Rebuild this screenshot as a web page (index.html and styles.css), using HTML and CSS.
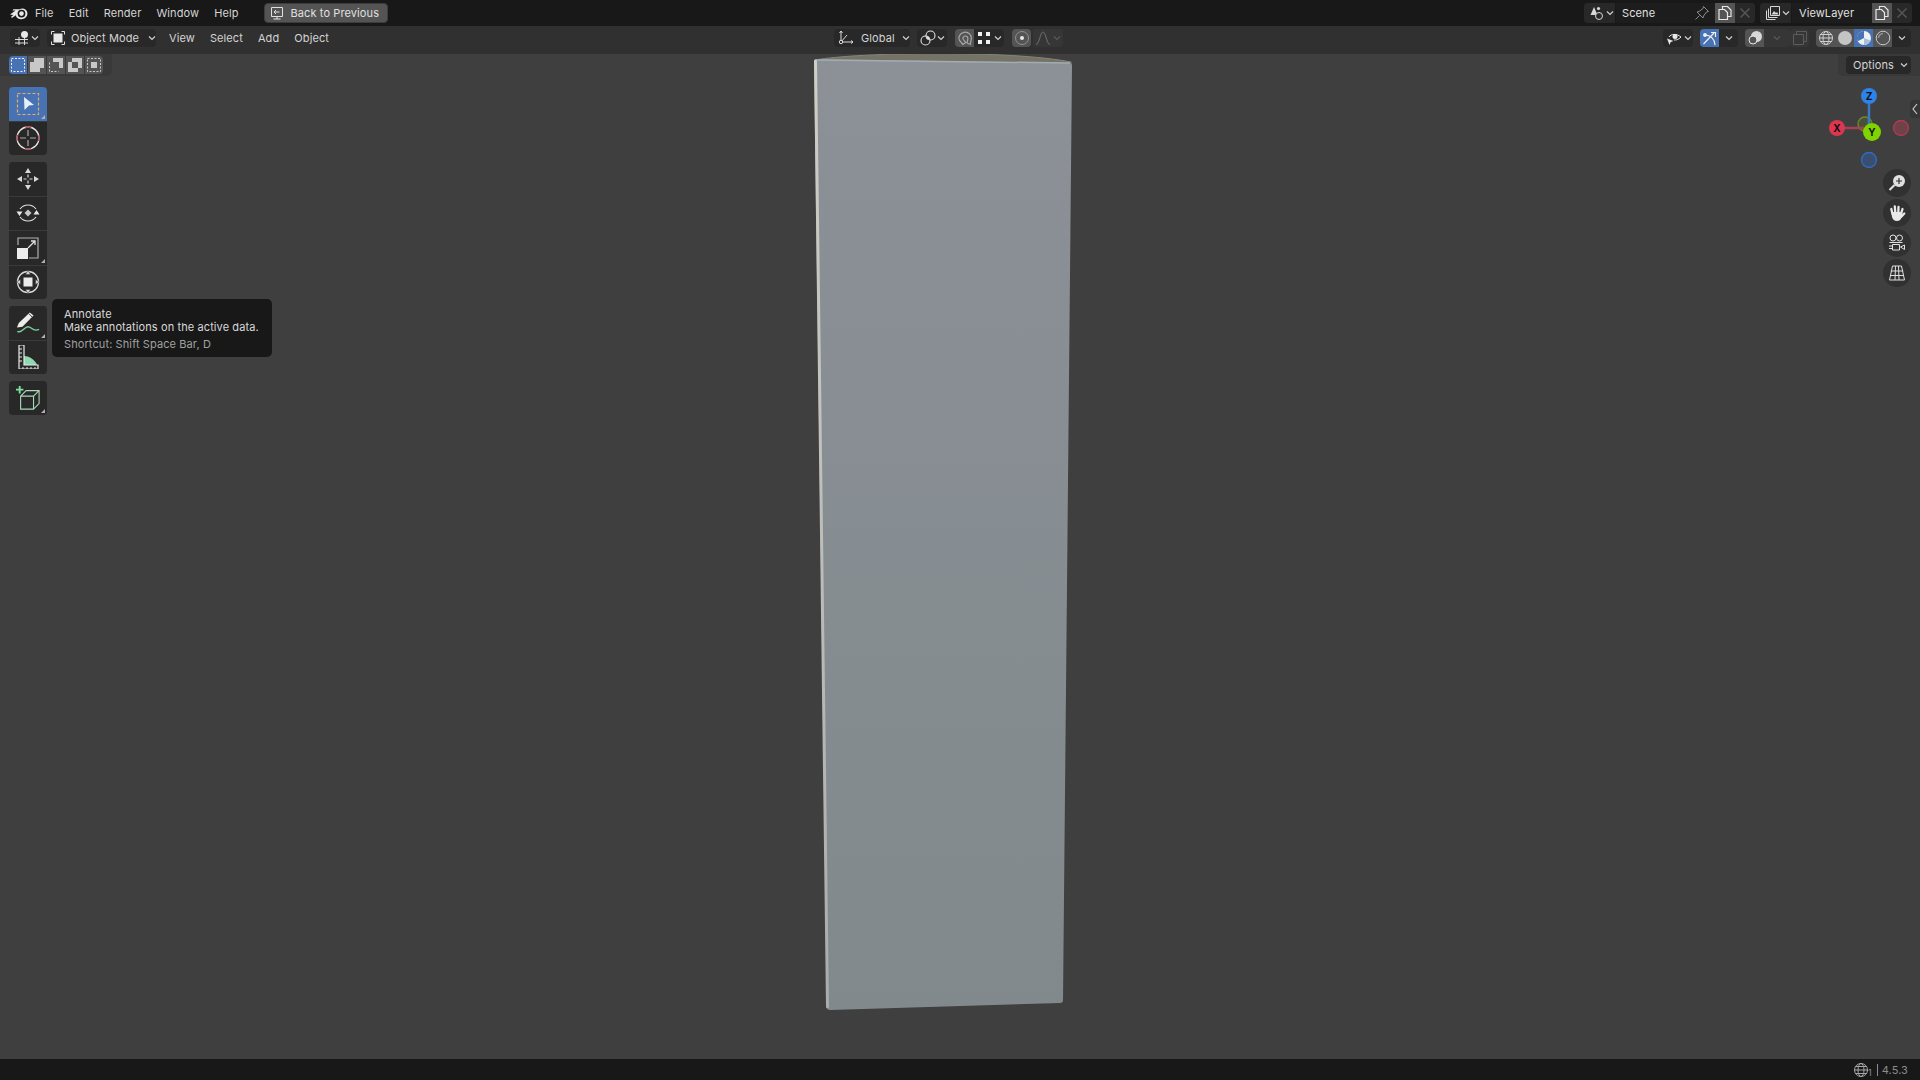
FILE: index.html
```html
<!DOCTYPE html>
<html>
<head>
  <link rel="stylesheet" href="styles.css">
</head>
<body>
  <div class="topbar">
    <svg class="logo" viewBox="0 0 18 14"><path d="M0 8.6 5.6 4.4H2.4L3.4 3.2H9.6C12.8 1.4 17 3.2 17.4 7 17.8 11 13.6 14 9.8 13 7.2 12.4 5.8 10.6 5.8 9.2L2.6 11.6C1.6 12.2.8 11.4 1.4 10.6L3.4 8.9Z" fill="#e8e8e8"/><circle cx="11.5" cy="7.6" r="3.9" fill="#181818"/><circle cx="11.5" cy="7.6" r="2.3" fill="#e8e8e8"/></svg>
    <nav class="menu">
      <span>File</span><span>Edit</span><span>Render</span><span>Window</span><span>Help</span>
    </nav>
    <div class="back-btn">
      <svg class="ico" viewBox="0 0 16 16" fill="none" stroke="#e0e0e0"><path d="M2.5 2.5H13.5V11.5H2.5ZM8 11.5V14M4.5 14H11.5M10.5 7H5M7 5 5 7 7 9"/></svg>
      <span>Back to Previous</span>
    </div>
    <div class="top-right">
      <div class="field scene">
        <div class="field-icon">
          <svg class="ico" viewBox="0 0 16 16"><path d="M5 2 8.5 10H1.5Z" fill="#d8d8d8"/><circle cx="9.5" cy="3.5" r="1.6" fill="#d8d8d8"/><circle cx="10" cy="11" r="3.5" fill="#282828" stroke="#d8d8d8"/></svg>
          <svg class="caret" viewBox="0 0 8 8"><path d="M1 2.5 4 5.5 7 2.5"/></svg>
        </div>
        <div class="field-name"><span>Scene</span>
          <svg class="ico pin" viewBox="0 0 16 16" fill="none" stroke="#8c8c8c"><path d="M9.5 1.5 14.5 6.5 12.5 7 9.5 11 9 13 3 7 5 6.5 9 3.5ZM5.5 10.5 1.5 14.5"/></svg>
        </div>
        <div class="field-btn on"><svg class="ico" viewBox="0 0 16 16" fill="none" stroke="#e8e8e8" stroke-width="1.2"><path d="M5.5 4.5V1.5H10.5L14 5V11.5H10.5M2 4.5H7.5L10.5 7.5V14.5H2Z"/></svg></div>
        <div class="field-btn"><svg class="ico" viewBox="0 0 16 16" stroke="#555" stroke-width="1.5"><path d="M3.5 3.5 12.5 12.5M12.5 3.5 3.5 12.5"/></svg></div>
      </div>
      <div class="field layer">
        <div class="field-icon">
          <svg class="ico" viewBox="0 0 16 16" fill="none" stroke="#d8d8d8"><path d="M5.5 1.5H14.5V10.5H5.5ZM3.5 3.5V12.5H12.5M1.5 5.5V14.5H10.5"/><path d="M6.5 9.5 9 6 11 8 12 7 13.5 9.5Z" fill="#d8d8d8" stroke="none"/></svg>
          <svg class="caret" viewBox="0 0 8 8"><path d="M1 2.5 4 5.5 7 2.5"/></svg>
        </div>
        <div class="field-name"><span>ViewLayer</span></div>
        <div class="field-btn on"><svg class="ico" viewBox="0 0 16 16" fill="none" stroke="#e8e8e8" stroke-width="1.2"><path d="M5.5 4.5V1.5H10.5L14 5V11.5H10.5M2 4.5H7.5L10.5 7.5V14.5H2Z"/></svg></div>
        <div class="field-btn"><svg class="ico" viewBox="0 0 16 16" stroke="#555" stroke-width="1.5"><path d="M3.5 3.5 12.5 12.5M12.5 3.5 3.5 12.5"/></svg></div>
      </div>
    </div>
  </div>

  <div class="header">
    <div class="hdr-left">
      <div class="btn editor-btn">
        <svg class="ico" viewBox="0 0 16 16" fill="none" stroke="#d8d8d8"><path d="M1 9.5H14M1 13H14M5 7V15M10.5 7.5V15"/><circle cx="10.5" cy="4.5" r="3.5" fill="#e8e8e8" stroke="none"/></svg>
        <svg class="caret" viewBox="0 0 8 8"><path d="M1 2.5 4 5.5 7 2.5"/></svg>
      </div>
      <div class="btn mode-btn">
        <svg class="ico" viewBox="0 0 16 16" fill="none" stroke="#e0e0e0"><path d="M1.5 4.5V1.5H4.5M11.5 1.5H14.5V4.5M14.5 11.5V14.5H11.5M4.5 14.5H1.5V11.5"/><rect x="3.5" y="3.5" width="9" height="9" fill="#e8e8e8" stroke="none"/></svg>
        <span class="mode-label">Object Mode</span>
        <svg class="caret" viewBox="0 0 8 8"><path d="M1 2.5 4 5.5 7 2.5"/></svg>
      </div>
      <nav class="menu hdr-menu"><span>View</span><span>Select</span><span>Add</span><span>Object</span></nav>
    </div>
    <div class="hdr-center">
      <div class="btn global-btn">
        <svg class="ico" viewBox="0 0 16 16" fill="none" stroke="#d8d8d8"><path d="M3 12V1M1.5 3 3 1 4.5 3M3 12H15M13 10.5 15 12 13 13.5M3 12 9 5"/><circle cx="3" cy="12" r="1.7" fill="#303030"/></svg>
        <span class="global-label">Global</span>
        <svg class="caret" viewBox="0 0 8 8"><path d="M1 2.5 4 5.5 7 2.5"/></svg>
      </div>
      <div class="btn pivot-btn">
        <svg class="ico" viewBox="0 0 16 16" fill="none" stroke="#e0e0e0" stroke-width="1.1"><circle cx="5.5" cy="10.5" r="4.5"/><circle cx="10.5" cy="5.5" r="4.5"/><circle cx="8" cy="8" r="1.6" fill="#e0e0e0" stroke="none"/></svg>
        <svg class="caret" viewBox="0 0 8 8"><path d="M1 2.5 4 5.5 7 2.5"/></svg>
      </div>
      <div class="joined snap">
        <div class="btn square on"><svg class="ico" viewBox="0 0 16 16" fill="none" stroke="#a8a8a8" stroke-width="1.2"><path d="M6 14.5 2.5 10.5C.8 8 2.5 3 7 2.3 11.5 1.7 15 5 14.3 9L13.2 14.5 10 13 10.8 9.5C11.2 7.5 10 5.8 8.3 6 6.3 6.2 5.3 8 6.3 9.500L8.700 12.500Z"/></svg></div>
        <div class="btn grid-btn">
          <svg class="ico" viewBox="0 0 16 16" fill="#f0f0f0"><rect x="2" y="2" width="4" height="4"/><rect x="10" y="2" width="4" height="4"/><rect x="2" y="10" width="4" height="4"/><rect x="10" y="10" width="4" height="4"/></svg>
          <svg class="caret" viewBox="0 0 8 8"><path d="M1 2.5 4 5.5 7 2.5"/></svg>
        </div>
      </div>
      <div class="btn square on prop-btn"><svg class="ico" viewBox="0 0 16 16" fill="none" stroke="#909090"><circle cx="8" cy="8" r="6.5"/><circle cx="8" cy="8" r="2" fill="#e8e8e8" stroke="none"/></svg></div>
      <div class="btn falloff-btn">
        <svg class="ico" viewBox="0 0 16 16" fill="none" stroke="#666" stroke-width="1.2"><path d="M1 14.5C4.5 14.5 5 2 8 2S11.5 14.5 15 14.5"/></svg>
        <svg class="caret dim" viewBox="0 0 8 8"><path d="M1 2.5 4 5.5 7 2.5"/></svg>
      </div>
    </div>
    <div class="hdr-right">
      <div class="btn vis-btn">
        <svg class="ico" viewBox="0 0 16 16"><path d="M3 7C5 3.5 11 3.5 15 7 12 10 10 10 8 10" fill="none" stroke="#e8e8e8"/><circle cx="9" cy="6.5" r="2.5" fill="#e8e8e8"/><path d="M1 8.5 7.5 11 4.7 12 3.5 15Z" fill="#e8e8e8"/></svg>
        <svg class="caret" viewBox="0 0 8 8"><path d="M1 2.5 4 5.5 7 2.5"/></svg>
      </div>
      <div class="joined">
        <div class="btn square blue"><svg class="ico" viewBox="0 0 16 16" fill="none" stroke="#f0f0f0" stroke-width="1.2"><path d="M1.5 14 12 3M3 5C8.5 5 13 9.5 13 15M9 2.5H13.5V7"/><circle cx="3" cy="5" r="1.3" fill="#f0f0f0"/></svg></div>
        <div class="btn small-drop"><svg class="caret" viewBox="0 0 8 8"><path d="M1 2.5 4 5.5 7 2.5"/></svg></div>
      </div>
      <div class="joined">
        <div class="btn square on"><svg class="ico" viewBox="0 0 16 16"><circle cx="9.5" cy="6.5" r="5.5" fill="#d8d8d8"/><circle cx="6" cy="10" r="4" fill="#545454" stroke="#e8e8e8"/></svg></div>
        <div class="btn small-drop dim-bg"><svg class="caret dim" viewBox="0 0 8 8"><path d="M1 2.5 4 5.5 7 2.5"/></svg></div>
      </div>
      <div class="btn square xray"><svg class="ico" viewBox="0 0 16 16" fill="none" stroke="#5c5c5c"><path d="M4.5 4.5V1.5H14.5V11.5H11.5M1.5 4.5H11.5V14.5H1.5Z"/></svg></div>
      <div class="joined shading">
        <div class="btn square on"><svg class="ico" viewBox="0 0 16 16" fill="none" stroke="#d0d0d0"><circle cx="8" cy="8" r="6.5"/><ellipse cx="8" cy="8" rx="3" ry="6.5"/><path d="M1.5 8H14.5M2.5 4.5H13.5M2.5 11.5H13.5"/></svg></div>
        <div class="btn square on"><svg class="ico" viewBox="0 0 16 16"><circle cx="8" cy="8" r="7" fill="#c4c4c4"/></svg></div>
        <div class="btn square blue"><svg class="ico" viewBox="0 0 16 16"><circle cx="8" cy="8" r="7" fill="#f0f0f0"/><path d="M8 8V1A7 7 0 0 0 1.8 11.3Z" fill="#4772b3"/><path d="M8 8 14.5 10.5A7 7 0 0 1 8 15Z" fill="#a8c0e0"/></svg></div>
        <div class="btn square on"><svg class="ico" viewBox="0 0 16 16" fill="none"><circle cx="8" cy="8" r="6.8" stroke="#c8c8c8"/><path d="M3.5 8A4.5 4.5 0 0 1 8 3.5" stroke="#909090" stroke-width="1.6"/></svg></div>
        <div class="btn small-drop"><svg class="caret" viewBox="0 0 8 8"><path d="M1 2.5 4 5.5 7 2.5"/></svg></div>
      </div>
    </div>
  </div>

  <div class="viewport">
    <svg class="scene-shape" viewBox="0 54 1920 1005">
      <defs>
        <linearGradient id="face" x1="0" y1="0" x2="0" y2="1">
          <stop offset="0" stop-color="#8b9196"/>
          <stop offset="1" stop-color="#82898d"/>
        </linearGradient>
        <linearGradient id="rim" x1="0" y1="0" x2="0" y2="1">
          <stop offset="0" stop-color="#cfcfc6"/>
          <stop offset="1" stop-color="#a9adab"/>
        </linearGradient>
      </defs>
      <path d="M815 60C860 52 1010 50 1071 62L1071 66 815 64Z" fill="#757366" stroke="#85857a"/>
      <path d="M814 62C814 60 815 59 817 59L1069 63C1071 63 1072 64 1072 66L1063 1000C1063 1002 1062 1003 1060 1003L830 1010C828 1010 827 1009 827 1007Z" fill="url(#face)"/>
      <path d="M815.5 61 827.5 1007" fill="none" stroke="url(#rim)" stroke-width="3" stroke-linecap="round"/>
      <path d="M817 60 1070 63" fill="none" stroke="#a3abb3" stroke-width="1.5"/>
    </svg>

    <div class="tool-strip">
      <div class="sel-modes">
        <div class="sel-mode active"><svg class="ico" viewBox="0 0 16 16" fill="none" stroke="#f0f0f0" stroke-dasharray="2 1.5"><rect x="1.5" y="1.5" width="13" height="13"/></svg></div>
        <div class="sel-mode"><svg class="ico" viewBox="0 0 16 16" fill="#c8c8c8"><path d="M5 1H15V11H11V15H1V5H5Z"/></svg></div>
        <div class="sel-mode"><svg class="ico" viewBox="0 0 16 16"><path d="M5 1H15V11H11V5H5Z" fill="#c8c8c8"/><path d="M1.5 5.5V14.5H10.5" fill="none" stroke="#c8c8c8" stroke-dasharray="2 1.5"/></svg></div>
        <div class="sel-mode"><svg class="ico" viewBox="0 0 16 16"><path fill-rule="evenodd" d="M5 1H15V11H11V15H1V5H5ZM5 5V11H11V5Z" fill="#c8c8c8"/></svg></div>
        <div class="sel-mode"><svg class="ico" viewBox="0 0 16 16"><rect x="5" y="5" width="6" height="6" fill="#c8c8c8"/><rect x="1.5" y="1.5" width="13" height="13" fill="none" stroke="#c8c8c8" stroke-dasharray="2 1.5"/></svg></div>
      </div>
    </div>

    <div class="options-strip"><div class="options-btn"><span>Options</span><svg class="caret" viewBox="0 0 8 8"><path d="M1 2.5 4 5.5 7 2.5"/></svg></div></div>

    <div class="toolbar">
      <div class="tool-group">
        <div class="tool active corner">
          <svg class="tool-ico" viewBox="0 0 24 24"><rect x="1.5" y="1.5" width="21" height="21" fill="none" stroke="#e8b060" stroke-width="1.2" stroke-dasharray="3 2"/><path d="M8 5 18 13 13 13.5 8.5 18Z" fill="#e8eef8"/></svg>
        </div>
        <div class="tool">
          <svg class="tool-ico" viewBox="0 0 24 24" fill="none"><circle cx="12" cy="12" r="11" stroke="#e8e8e8" stroke-width="1.3"/><circle cx="12" cy="12" r="11" stroke="#a83c4c" stroke-width="1.3" stroke-dasharray="6 11.27" stroke-dashoffset="3"/><path d="M12 4V10M12 14V20M4 12H10M14 12H20" stroke="#a8a8a8" stroke-width="1.2"/></svg>
        </div>
      </div>
      <div class="tool-group">
        <div class="tool">
          <svg class="tool-ico" viewBox="0 0 24 24" fill="#d8d8d8"><path d="M12 1 15 6H9ZM12 23 9 18H15ZM1 12 6 9V15ZM23 12 18 15V9Z"/><path d="M12 7.5V10.5M12 13.5V16.5M7.5 12H10.5M13.5 12H16.5" stroke="#d8d8d8" stroke-width="1.2"/></svg>
        </div>
        <div class="tool">
          <svg class="tool-ico" viewBox="0 0 24 24"><path d="M4 8A10 10 0 0 1 20 8M20 16A10 10 0 0 1 4 16" fill="none" stroke="#e0e0e0" stroke-width="1.2"/><path d="M12 8.5 15.5 12 12 15.5 8.5 12Z" fill="#c8c8c8"/><path d="M.5 10.5H6.5L3.5 15ZM17.5 13.5H23.5L20.5 9Z" fill="#e8e8e8"/></svg>
        </div>
        <div class="tool corner">
          <svg class="tool-ico" viewBox="0 0 24 24" fill="none"><path d="M2 9V2H22V22H13" stroke="#b0b0b0" stroke-width="1.2"/><rect x="1" y="12" width="11" height="11" fill="#ececec"/><path d="M12 12 19 5M15 5H19V9" stroke="#e0e0e0" stroke-width="1.3"/></svg>
        </div>
        <div class="tool">
          <svg class="tool-ico" viewBox="0 0 24 24"><circle cx="12" cy="12" r="10.5" fill="none" stroke="#d8d8d8" stroke-width="1.3"/><rect x="7.5" y="7.5" width="9" height="9" fill="#ececec"/><path d="M12 .5 14.5 4.5H9.5ZM12 23.5 9.5 19.5H14.5ZM.5 12 4.5 9.5V14.5ZM23.5 12 19.5 14.5V9.5Z" fill="#d8d8d8" stroke="#303030" stroke-width=".5"/></svg>
        </div>
      </div>
      <div class="tool-group">
        <div class="tool corner">
          <svg class="tool-ico" viewBox="0 0 26 26" fill="none"><path d="M1 18 3 13 15 1.5 19 5 7 17Z" fill="#ececec"/><path d="M14 3 17.5 6.5" stroke="#2a2a2a"/><path d="M1.5 22C6 25 9 17 13 17S18 23 25 20" stroke="#7fd0a0" stroke-width="1.5"/></svg>
        </div>
        <div class="tool">
          <svg class="tool-ico" viewBox="0 0 24 24" fill="none"><path d="M8 11C14 11 20 16 21 20H8Z" fill="#8fd8b0"/><path d="M3 0H8V20H22V24H3Z" fill="#2a2a2a" stroke="#e8e8e8" stroke-width="1.2"/><path d="M3 4H6M3 8H6M3 12H6M3 16H6M7 22V24M11 22V24M15 22V24M19 22V24" stroke="#e8e8e8"/></svg>
        </div>
      </div>
      <div class="tool-group">
        <div class="tool corner">
          <svg class="tool-ico" viewBox="0 0 26 26" fill="none"><path d="M5 11H19V25H5ZM5 11 11 5H25V19L19 25M19 11 25 5" stroke="#a8d8b8" stroke-width="1.2"/><path d="M4 0V8M0 4H8" stroke="#7fe0a0" stroke-width="2"/></svg>
        </div>
      </div>
    </div>

    <div class="tooltip">
      <div>Annotate</div>
      <div>Make annotations on the active data.</div>
      <div class="tooltip-hint">Shortcut: Shift Space Bar, D</div>
    </div>

    <svg class="gizmo" viewBox="-8 0 88 100">
      <circle cx="33" cy="50" r="7" fill="#46503a" stroke="#6f8a28" stroke-width="1.3"/>
      <path d="M37 30V50" stroke-width="2.5" stroke="#3a78c8"/>
      <path d="M5 54H32" stroke-width="2.5" stroke="#a8404f"/>
      <circle cx="37" cy="22" r="8" fill="#2e83e8"/>
      <text x="37" y="26" class="axis">Z</text>
      <circle cx="5" cy="54" r="8" fill="#dc3650"/>
      <text x="5" y="58" class="axis">X</text>
      <circle cx="69" cy="54" r="7.5" fill="#6e4248" stroke="#b03a50" stroke-width="1.3"/>
      <circle cx="37" cy="86" r="7.5" fill="#3a4f70" stroke="#2e6cc0" stroke-width="1.3"/>
      <circle cx="40" cy="58" r="9" fill="#7fd400"/>
      <text x="40" y="62" class="axis">Y</text>
    </svg>

    <div class="nav-tab"><svg viewBox="0 0 8 12" fill="none" stroke="#c8c8c8" stroke-width="1.2"><path d="M6 1 2 6 6 11"/></svg></div>

    <div class="nav-btns">
      <div class="nav-btn"><svg class="ico" viewBox="0 0 18 18"><circle cx="11" cy="7" r="6" fill="#e0e0e0"/><path d="M11 4V10M8 7H14" stroke="#303030" stroke-width="1.2"/><path d="M6.5 11 1.5 16" stroke="#e0e0e0" stroke-width="2.2"/></svg></div>
      <div class="nav-btn"><svg class="ico" viewBox="0 0 18 18"><path d="M4.5 10 3.3 5M7.3 9 6.8 2.5M10.3 9 10.5 3M13 10 14.5 5M13 13 16.3 9.5" fill="none" stroke="#e8e8e8" stroke-width="2.3" stroke-linecap="round"/><path d="M3.5 8H13.5V13C13 16 11 17 9 17 6 17 5 15.5 4 13Z" fill="#e8e8e8"/></svg></div>
      <div class="nav-btn"><svg class="ico" viewBox="0 0 18 18" fill="none" stroke="#e0e0e0"><circle cx="5" cy="4" r="3"/><circle cx="11.5" cy="4" r="3"/><path d="M1.5 8.5H14.5M4.5 10.5H11.5V16H4.5ZM1 12H4.5V14.5H1M12.5 13 16.5 11V15.5Z"/></svg></div>
      <div class="nav-btn"><svg class="ico" viewBox="0 0 18 18" fill="none" stroke="#e0e0e0"><path d="M4.5 2H13.5L16.5 16H1.5ZM2.8 7H15.2M2 11.5H16M7.5 2 7 16M10.5 2 11 16"/></svg></div>
    </div>
  </div>

  <div class="statusbar">
    <svg class="ico" viewBox="0 0 16 16" fill="none" stroke="#a8a8a8"><circle cx="8" cy="8" r="6.5"/><ellipse cx="8" cy="8" rx="3" ry="6.5"/><path d="M1.5 8H14.5M2.5 4.5H13.5M2.5 11.5H13.5"/></svg>
    <span class="sub">1</span>
    <span class="sep"></span>
    <span>4.5.3</span>
  </div>
</body>
</html>
```

FILE: styles.css
```css
* {
  box-sizing: border-box;
}

body {
  margin: 0;
  height: 100vh;
  display: flex;
  flex-direction: column;
  overflow: hidden;
  background-color: #3f3f3f;
  color: #d4d4d4;
  font-family: Inter, "Liberation Sans", sans-serif;
  font-size: 11px;
  letter-spacing: 0.1px;
}

svg {
  display: block;
  flex-shrink: 0;
}

.ico {
  width: 16px;
  height: 16px;
}

.caret {
  width: 8px;
  height: 8px;
  fill: none;
  stroke: #d0d0d0;
  stroke-width: 1.2;
}

.caret.dim {
  stroke: #5a5a5a;
}

/* top bar */
.topbar {
  height: 26px;
  flex-shrink: 0;
  display: flex;
  align-items: center;
  padding: 0 8px 0 10px;
  background-color: #181818;
}

.logo {
  width: 18px;
  height: 14px;
}

.menu {
  display: flex;
  gap: 15px;
  margin-left: 7px;
}

.back-btn {
  display: flex;
  align-items: center;
  gap: 6px;
  width: 124px;
  height: 20px;
  margin-left: 25px;
  padding-left: 4px;
  background-color: #545454;
  border: 1px solid #3d3d3d;
  border-radius: 4px;
  color: #e0e0e0;
}

.top-right {
  display: flex;
  gap: 5px;
  margin-left: auto;
}

.field {
  display: flex;
  height: 20px;
  background-color: #282828;
  border-radius: 4px;
  overflow: hidden;
}

.field-icon {
  width: 32px;
  display: flex;
  align-items: center;
  padding-left: 5px;
  gap: 1px;
  background-color: #282828;
  border-right: 1px solid #181818;
}

.field-name {
  display: flex;
  align-items: center;
  justify-content: space-between;
  padding: 0 5px 0 6px;
  background-color: #1d1d1d;
  color: #e0e0e0;
}

.scene .field-name {
  width: 99px;
}

.layer .field-name {
  width: 80px;
  padding-left: 7px;
}

.field-btn {
  width: 20px;
  display: flex;
  align-items: center;
  justify-content: center;
  background-color: #282828;
}

.field-btn.on {
  background-color: #545454;
}

/* editor header */
.header {
  height: 28px;
  flex-shrink: 0;
  display: flex;
  align-items: flex-start;
  padding: 3px 9px 0 10px;
  background-color: #303030;
}

.hdr-left {
  width: 824px;
  display: flex;
  align-items: center;
  height: 18px;
}

.hdr-center,
.hdr-right {
  display: flex;
  align-items: center;
  gap: 7px;
}

.hdr-right {
  margin-left: auto;
}

.btn {
  height: 18px;
  display: flex;
  align-items: center;
  background-color: #282828;
  border-radius: 4px;
}

.editor-btn {
  width: 30px;
  padding-left: 4px;
  gap: 1px;
}

.mode-btn {
  width: 109px;
  margin-left: 7px;
  padding-left: 3px;
}

.mode-label {
  margin-left: 5px;
  width: 79px;
}

.hdr-menu {
  margin-left: 13px;
}

.global-btn {
  width: 76px;
  padding-left: 4px;
}

.global-label {
  margin-left: 7px;
  width: 43px;
}

.pivot-btn {
  width: 30px;
  padding-left: 3px;
  gap: 1px;
}

.square {
  width: 19px;
  justify-content: center;
}

.joined {
  display: flex;
}

.joined .btn {
  border-radius: 0;
}

.joined .btn:first-child {
  border-radius: 4px 0 0 4px;
}

.joined .btn:last-child {
  border-radius: 0 4px 4px 0;
}

.btn.on {
  background-color: #545454;
}

.btn.blue {
  background-color: #4772b3;
}

.snap {
  margin-left: 1px;
}

.grid-btn {
  width: 30px;
  padding-left: 2px;
  gap: 2px;
}

.prop-btn {
  margin-left: 1px;
}

.falloff-btn {
  width: 30px;
  margin-left: -5px;
  padding-left: 2px;
  gap: 2px;
  background-color: #363636;
}

.small-drop {
  width: 19px;
  justify-content: center;
}

.dim-bg {
  width: 26px;
  background-color: #363636;
}

.xray {
  margin-left: -7px;
  background-color: #363636;
}

.vis-btn {
  width: 30px;
  padding-left: 3px;
  gap: 2px;
}

/* 3d viewport */
.viewport {
  flex: 1;
  position: relative;
  background-color: #3f3f3f;
}

.scene-shape {
  position: absolute;
  inset: 0;
  width: 100%;
  height: 100%;
}

.tool-strip {
  position: absolute;
  top: 0;
  left: 0;
  width: 112px;
  height: 22px;
  padding: 2px 0 0 9px;
  background-color: #393939;
  border-radius: 0 0 5px 0;
}

.sel-modes {
  display: flex;
  gap: 1px;
}

.sel-mode {
  width: 18px;
  height: 18px;
  display: flex;
  align-items: center;
  justify-content: center;
  background-color: #545454;
}

.sel-mode:first-child {
  border-radius: 4px 0 0 4px;
}

.sel-mode:last-child {
  border-radius: 0 4px 4px 0;
}

.sel-mode.active {
  background-color: #4772b3;
}

.options-strip {
  position: absolute;
  top: 0;
  right: 0;
  width: 82px;
  height: 22px;
  padding: 2px 9px 0 8px;
  background-color: #393939;
  border-radius: 0 0 0 5px;
}

.options-btn {
  height: 18px;
  display: flex;
  align-items: center;
  justify-content: space-between;
  padding: 0 3px 0 7px;
  background-color: #282828;
  border-radius: 4px;
}

.toolbar {
  position: absolute;
  top: 33px;
  left: 9px;
  width: 38px;
  display: flex;
  flex-direction: column;
  gap: 7px;
}

.tool-group {
  display: flex;
  flex-direction: column;
  gap: 1px;
  background-color: #3a3a3a;
  border-radius: 4px;
}

.tool {
  position: relative;
  height: 33.5px;
  display: flex;
  align-items: center;
  justify-content: center;
  background-color: #282828;
}

.tool:first-child {
  border-radius: 4px 4px 0 0;
}

.tool:last-child {
  border-radius: 0 0 4px 4px;
}

.tool:only-child {
  border-radius: 4px;
}

.tool.active {
  background-color: #4772b3;
}

.tool.corner::after {
  content: "";
  position: absolute;
  right: 2px;
  bottom: 2px;
  border-style: solid;
  border-width: 0 0 4px 4px;
  border-color: transparent transparent #b0b0b0 transparent;
}

.tool-ico {
  width: 24px;
  height: 24px;
}

.tooltip {
  position: absolute;
  top: 245px;
  left: 52px;
  width: 220px;
  height: 58px;
  padding: 9px 12px;
  background-color: #181818;
  border-radius: 5px;
  line-height: 13px;
  color: #d8d8d8;
}

.tooltip-hint {
  margin-top: 4px;
  color: #a0a0a0;
}

.gizmo {
  position: absolute;
  top: 20px;
  left: 1824px;
  width: 88px;
  height: 100px;
}

.axis {
  font-size: 10px;
  font-weight: 700;
  text-anchor: middle;
  fill: #111;
}

.nav-tab {
  position: absolute;
  top: 46px;
  right: 0;
  width: 10px;
  height: 18px;
  padding: 3px 1px;
  background-color: #363636;
  border-radius: 3px 0 0 3px;
}

.nav-btns {
  position: absolute;
  top: 115px;
  left: 1883px;
  display: flex;
  flex-direction: column;
  gap: 2px;
}

.nav-btn {
  width: 28px;
  height: 28px;
  display: flex;
  align-items: center;
  justify-content: center;
  background-color: #313131;
  border-radius: 50%;
}

.nav-btn .ico {
  width: 18px;
  height: 18px;
}

/* status bar */
.statusbar {
  height: 21px;
  flex-shrink: 0;
  display: flex;
  align-items: center;
  justify-content: flex-end;
  padding-right: 12px;
  background-color: #181818;
  color: #8c8c8c;
}

.sub {
  margin: 6px 0 0 -1px;
  font-size: 9px;
}

.sep {
  width: 1px;
  height: 12px;
  margin: 0 4px 0 5px;
  background-color: #8c8c8c;
}
```
